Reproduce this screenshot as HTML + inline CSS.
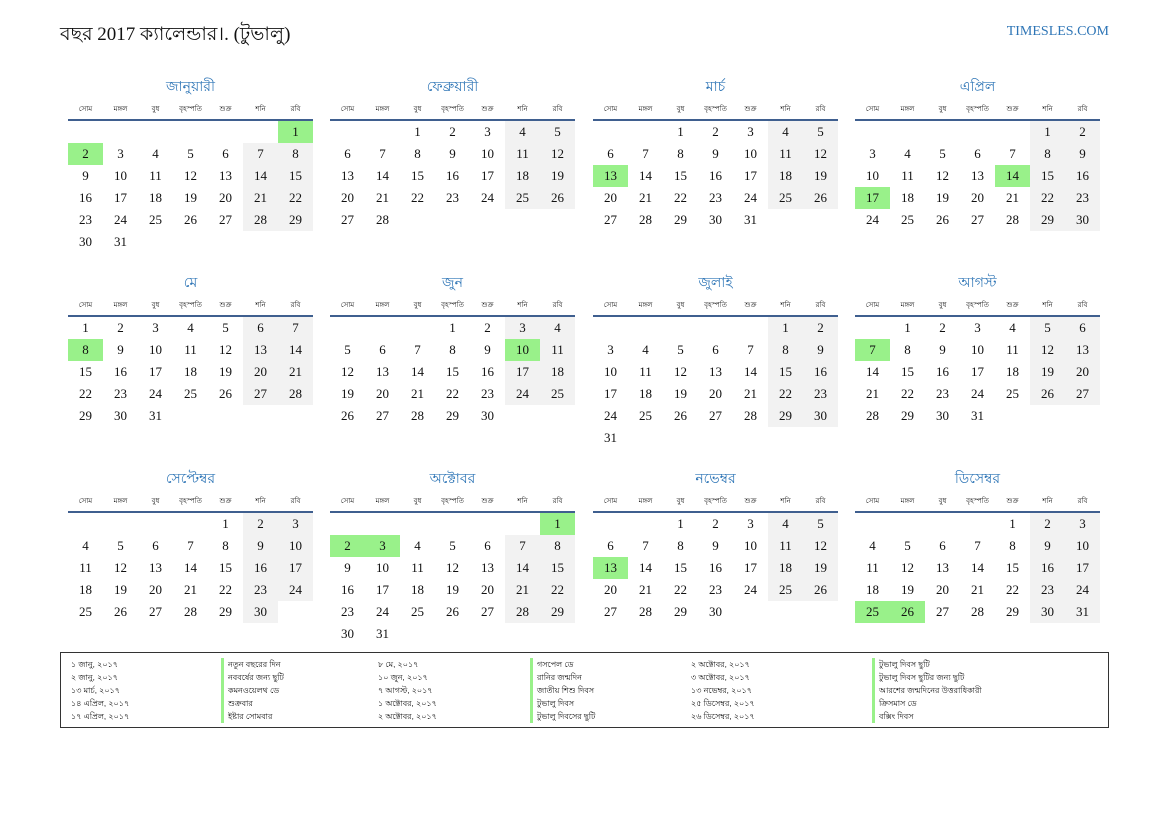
<!DOCTYPE html>
<html><head><meta charset="utf-8"><style>
body{margin:0;width:1169px;height:827px;background:#fff;position:relative;font-family:"Liberation Serif","Noto Serif CJK SC",serif;color:#111;overflow:hidden}
.t{position:absolute;left:60px;top:20px;font-size:19px;white-space:nowrap}
.s{position:absolute;right:60px;top:24px;font-size:14px;color:#2e75b6}
.m{position:absolute;width:245px}
.mt{height:20px;line-height:20px;text-align:center;color:#2e75b6;font-size:14px;font-family:"Liberation Sans","Noto Sans CJK SC",sans-serif}
table{border-collapse:collapse;width:245px;table-layout:fixed;margin-top:3px}
th{height:20px;font-size:7px;font-weight:normal;border-bottom:2px solid #3f5f8f;font-family:"Liberation Sans","Noto Sans CJK SC",sans-serif;padding:0}
td{height:22px;padding:0;text-align:center;font-size:13px;width:35px}
td.w{background:#f2f2f2}td.h{background:#99f18a}
.lg{position:absolute;left:60px;top:652px;width:1047px;height:74px;border:1px solid #333}
.c{position:absolute;top:5px;font-size:8px;line-height:13px;font-family:"Liberation Sans","Noto Sans CJK SC",sans-serif;white-space:nowrap}
.b{border-left:3px solid #99f18a;padding-left:4px}
</style></head><body>
<div class="t">বছর 2017 ক্যালেন্ডার।. (টুভালু)</div>
<div class="s">TIMESLES.COM</div>

<div class="m" style="left:68px;top:76px"><div class="mt">জানুয়ারী</div><table><tr><th>সোম</th><th>মঙ্গল</th><th>বুধ</th><th>বৃহস্পতি</th><th>শুক্র</th><th>শনি</th><th>রবি</th></tr>
<tr><td></td><td></td><td></td><td></td><td></td><td></td><td class="h">1</td></tr>
<tr><td class="h">2</td><td>3</td><td>4</td><td>5</td><td>6</td><td class="w">7</td><td class="w">8</td></tr>
<tr><td>9</td><td>10</td><td>11</td><td>12</td><td>13</td><td class="w">14</td><td class="w">15</td></tr>
<tr><td>16</td><td>17</td><td>18</td><td>19</td><td>20</td><td class="w">21</td><td class="w">22</td></tr>
<tr><td>23</td><td>24</td><td>25</td><td>26</td><td>27</td><td class="w">28</td><td class="w">29</td></tr>
<tr><td>30</td><td>31</td><td></td><td></td><td></td><td></td><td></td></tr></table></div>

<div class="m" style="left:330px;top:76px"><div class="mt">ফেব্রুয়ারী</div><table><tr><th>সোম</th><th>মঙ্গল</th><th>বুধ</th><th>বৃহস্পতি</th><th>শুক্র</th><th>শনি</th><th>রবি</th></tr>
<tr><td></td><td></td><td>1</td><td>2</td><td>3</td><td class="w">4</td><td class="w">5</td></tr>
<tr><td>6</td><td>7</td><td>8</td><td>9</td><td>10</td><td class="w">11</td><td class="w">12</td></tr>
<tr><td>13</td><td>14</td><td>15</td><td>16</td><td>17</td><td class="w">18</td><td class="w">19</td></tr>
<tr><td>20</td><td>21</td><td>22</td><td>23</td><td>24</td><td class="w">25</td><td class="w">26</td></tr>
<tr><td>27</td><td>28</td><td></td><td></td><td></td><td></td><td></td></tr></table></div>

<div class="m" style="left:593px;top:76px"><div class="mt">মার্চ</div><table><tr><th>সোম</th><th>মঙ্গল</th><th>বুধ</th><th>বৃহস্পতি</th><th>শুক্র</th><th>শনি</th><th>রবি</th></tr>
<tr><td></td><td></td><td>1</td><td>2</td><td>3</td><td class="w">4</td><td class="w">5</td></tr>
<tr><td>6</td><td>7</td><td>8</td><td>9</td><td>10</td><td class="w">11</td><td class="w">12</td></tr>
<tr><td class="h">13</td><td>14</td><td>15</td><td>16</td><td>17</td><td class="w">18</td><td class="w">19</td></tr>
<tr><td>20</td><td>21</td><td>22</td><td>23</td><td>24</td><td class="w">25</td><td class="w">26</td></tr>
<tr><td>27</td><td>28</td><td>29</td><td>30</td><td>31</td><td></td><td></td></tr></table></div>

<div class="m" style="left:855px;top:76px"><div class="mt">এপ্রিল</div><table><tr><th>সোম</th><th>মঙ্গল</th><th>বুধ</th><th>বৃহস্পতি</th><th>শুক্র</th><th>শনি</th><th>রবি</th></tr>
<tr><td></td><td></td><td></td><td></td><td></td><td class="w">1</td><td class="w">2</td></tr>
<tr><td>3</td><td>4</td><td>5</td><td>6</td><td>7</td><td class="w">8</td><td class="w">9</td></tr>
<tr><td>10</td><td>11</td><td>12</td><td>13</td><td class="h">14</td><td class="w">15</td><td class="w">16</td></tr>
<tr><td class="h">17</td><td>18</td><td>19</td><td>20</td><td>21</td><td class="w">22</td><td class="w">23</td></tr>
<tr><td>24</td><td>25</td><td>26</td><td>27</td><td>28</td><td class="w">29</td><td class="w">30</td></tr></table></div>

<div class="m" style="left:68px;top:272px"><div class="mt">মে</div><table><tr><th>সোম</th><th>মঙ্গল</th><th>বুধ</th><th>বৃহস্পতি</th><th>শুক্র</th><th>শনি</th><th>রবি</th></tr>
<tr><td>1</td><td>2</td><td>3</td><td>4</td><td>5</td><td class="w">6</td><td class="w">7</td></tr>
<tr><td class="h">8</td><td>9</td><td>10</td><td>11</td><td>12</td><td class="w">13</td><td class="w">14</td></tr>
<tr><td>15</td><td>16</td><td>17</td><td>18</td><td>19</td><td class="w">20</td><td class="w">21</td></tr>
<tr><td>22</td><td>23</td><td>24</td><td>25</td><td>26</td><td class="w">27</td><td class="w">28</td></tr>
<tr><td>29</td><td>30</td><td>31</td><td></td><td></td><td></td><td></td></tr></table></div>

<div class="m" style="left:330px;top:272px"><div class="mt">জুন</div><table><tr><th>সোম</th><th>মঙ্গল</th><th>বুধ</th><th>বৃহস্পতি</th><th>শুক্র</th><th>শনি</th><th>রবি</th></tr>
<tr><td></td><td></td><td></td><td>1</td><td>2</td><td class="w">3</td><td class="w">4</td></tr>
<tr><td>5</td><td>6</td><td>7</td><td>8</td><td>9</td><td class="h">10</td><td class="w">11</td></tr>
<tr><td>12</td><td>13</td><td>14</td><td>15</td><td>16</td><td class="w">17</td><td class="w">18</td></tr>
<tr><td>19</td><td>20</td><td>21</td><td>22</td><td>23</td><td class="w">24</td><td class="w">25</td></tr>
<tr><td>26</td><td>27</td><td>28</td><td>29</td><td>30</td><td></td><td></td></tr></table></div>

<div class="m" style="left:593px;top:272px"><div class="mt">জুলাই</div><table><tr><th>সোম</th><th>মঙ্গল</th><th>বুধ</th><th>বৃহস্পতি</th><th>শুক্র</th><th>শনি</th><th>রবি</th></tr>
<tr><td></td><td></td><td></td><td></td><td></td><td class="w">1</td><td class="w">2</td></tr>
<tr><td>3</td><td>4</td><td>5</td><td>6</td><td>7</td><td class="w">8</td><td class="w">9</td></tr>
<tr><td>10</td><td>11</td><td>12</td><td>13</td><td>14</td><td class="w">15</td><td class="w">16</td></tr>
<tr><td>17</td><td>18</td><td>19</td><td>20</td><td>21</td><td class="w">22</td><td class="w">23</td></tr>
<tr><td>24</td><td>25</td><td>26</td><td>27</td><td>28</td><td class="w">29</td><td class="w">30</td></tr>
<tr><td>31</td><td></td><td></td><td></td><td></td><td></td><td></td></tr></table></div>

<div class="m" style="left:855px;top:272px"><div class="mt">আগস্ট</div><table><tr><th>সোম</th><th>মঙ্গল</th><th>বুধ</th><th>বৃহস্পতি</th><th>শুক্র</th><th>শনি</th><th>রবি</th></tr>
<tr><td></td><td>1</td><td>2</td><td>3</td><td>4</td><td class="w">5</td><td class="w">6</td></tr>
<tr><td class="h">7</td><td>8</td><td>9</td><td>10</td><td>11</td><td class="w">12</td><td class="w">13</td></tr>
<tr><td>14</td><td>15</td><td>16</td><td>17</td><td>18</td><td class="w">19</td><td class="w">20</td></tr>
<tr><td>21</td><td>22</td><td>23</td><td>24</td><td>25</td><td class="w">26</td><td class="w">27</td></tr>
<tr><td>28</td><td>29</td><td>30</td><td>31</td><td></td><td></td><td></td></tr></table></div>

<div class="m" style="left:68px;top:468px"><div class="mt">সেপ্টেম্বর</div><table><tr><th>সোম</th><th>মঙ্গল</th><th>বুধ</th><th>বৃহস্পতি</th><th>শুক্র</th><th>শনি</th><th>রবি</th></tr>
<tr><td></td><td></td><td></td><td></td><td>1</td><td class="w">2</td><td class="w">3</td></tr>
<tr><td>4</td><td>5</td><td>6</td><td>7</td><td>8</td><td class="w">9</td><td class="w">10</td></tr>
<tr><td>11</td><td>12</td><td>13</td><td>14</td><td>15</td><td class="w">16</td><td class="w">17</td></tr>
<tr><td>18</td><td>19</td><td>20</td><td>21</td><td>22</td><td class="w">23</td><td class="w">24</td></tr>
<tr><td>25</td><td>26</td><td>27</td><td>28</td><td>29</td><td class="w">30</td><td></td></tr></table></div>

<div class="m" style="left:330px;top:468px"><div class="mt">অক্টোবর</div><table><tr><th>সোম</th><th>মঙ্গল</th><th>বুধ</th><th>বৃহস্পতি</th><th>শুক্র</th><th>শনি</th><th>রবি</th></tr>
<tr><td></td><td></td><td></td><td></td><td></td><td></td><td class="h">1</td></tr>
<tr><td class="h">2</td><td class="h">3</td><td>4</td><td>5</td><td>6</td><td class="w">7</td><td class="w">8</td></tr>
<tr><td>9</td><td>10</td><td>11</td><td>12</td><td>13</td><td class="w">14</td><td class="w">15</td></tr>
<tr><td>16</td><td>17</td><td>18</td><td>19</td><td>20</td><td class="w">21</td><td class="w">22</td></tr>
<tr><td>23</td><td>24</td><td>25</td><td>26</td><td>27</td><td class="w">28</td><td class="w">29</td></tr>
<tr><td>30</td><td>31</td><td></td><td></td><td></td><td></td><td></td></tr></table></div>

<div class="m" style="left:593px;top:468px"><div class="mt">নভেম্বর</div><table><tr><th>সোম</th><th>মঙ্গল</th><th>বুধ</th><th>বৃহস্পতি</th><th>শুক্র</th><th>শনি</th><th>রবি</th></tr>
<tr><td></td><td></td><td>1</td><td>2</td><td>3</td><td class="w">4</td><td class="w">5</td></tr>
<tr><td>6</td><td>7</td><td>8</td><td>9</td><td>10</td><td class="w">11</td><td class="w">12</td></tr>
<tr><td class="h">13</td><td>14</td><td>15</td><td>16</td><td>17</td><td class="w">18</td><td class="w">19</td></tr>
<tr><td>20</td><td>21</td><td>22</td><td>23</td><td>24</td><td class="w">25</td><td class="w">26</td></tr>
<tr><td>27</td><td>28</td><td>29</td><td>30</td><td></td><td></td><td></td></tr></table></div>

<div class="m" style="left:855px;top:468px"><div class="mt">ডিসেম্বর</div><table><tr><th>সোম</th><th>মঙ্গল</th><th>বুধ</th><th>বৃহস্পতি</th><th>শুক্র</th><th>শনি</th><th>রবি</th></tr>
<tr><td></td><td></td><td></td><td></td><td>1</td><td class="w">2</td><td class="w">3</td></tr>
<tr><td>4</td><td>5</td><td>6</td><td>7</td><td>8</td><td class="w">9</td><td class="w">10</td></tr>
<tr><td>11</td><td>12</td><td>13</td><td>14</td><td>15</td><td class="w">16</td><td class="w">17</td></tr>
<tr><td>18</td><td>19</td><td>20</td><td>21</td><td>22</td><td class="w">23</td><td class="w">24</td></tr>
<tr><td class="h">25</td><td class="h">26</td><td>27</td><td>28</td><td>29</td><td class="w">30</td><td class="w">31</td></tr></table></div>

<div class="lg">
<div class="c" style="left:10px">১ জানু, ২০১৭<br>২ জানু, ২০১৭<br>১৩ মার্চ, ২০১৭<br>১৪ এপ্রিল, ২০১৭<br>১৭ এপ্রিল, ২০১৭</div>
<div class="c b" style="left:160px">নতুন বছরের দিন<br>নববর্ষের জন্য ছুটি<br>কমনওয়েলথ ডে<br>শুক্রবার<br>ইষ্টার সোমবার</div>
<div class="c" style="left:317px">৮ মে, ২০১৭<br>১০ জুন, ২০১৭<br>৭ আগস্ট, ২০১৭<br>১ অক্টোবর, ২০১৭<br>২ অক্টোবর, ২০১৭</div>
<div class="c b" style="left:469px">গসপেল ডে<br>রানির জন্মদিন<br>জাতীয় শিশু দিবস<br>টুভালু দিবস<br>টুভালু দিবসের ছুটি</div>
<div class="c" style="left:630px">২ অক্টোবর, ২০১৭<br>৩ অক্টোবর, ২০১৭<br>১৩ নভেম্বর, ২০১৭<br>২৫ ডিসেম্বর, ২০১৭<br>২৬ ডিসেম্বর, ২০১৭</div>
<div class="c b" style="left:811px">টুভালু দিবস ছুটি<br>টুভালু দিবস ছুটির জন্য ছুটি<br>আরশের জন্মদিনের উত্তরাধিকারী<br>ক্রিসমাস ডে<br>বক্সিং দিবস</div>
</div>
</body></html>
